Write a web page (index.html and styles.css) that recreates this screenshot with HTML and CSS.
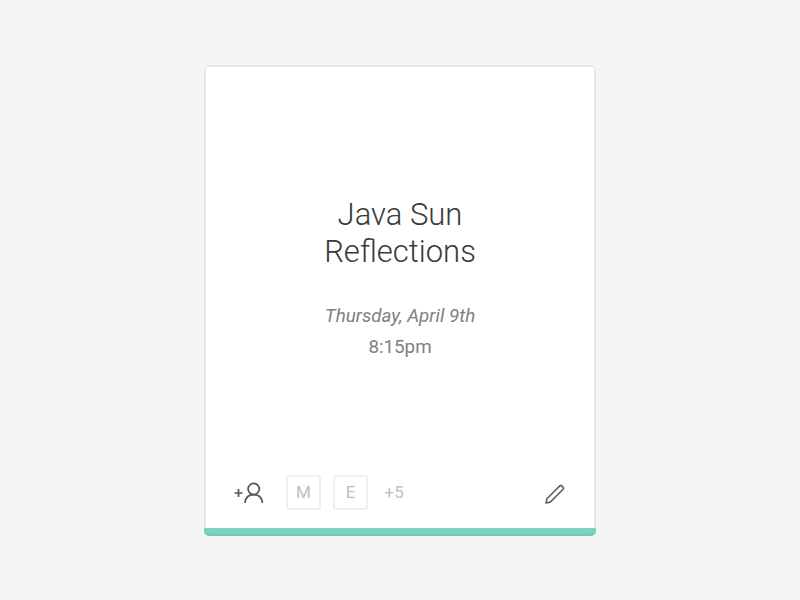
FILE: index.html
```html
<!DOCTYPE html>
<html lang="en">
<head>
<meta charset="utf-8">
<title>Java Sun Reflections</title>
<link rel="stylesheet" href="styles.css">
</head>
<body>
<article class="card">
  <div class="panel">
    <div class="details">
      <h1 class="title">Java Sun<br>Reflections</h1>
      <p class="date">Thursday, April 9th</p>
      <p class="time">8:15pm</p>
    </div>
    <footer class="actions">
      <svg class="add-person" width="30" height="22" viewBox="0 0 30 22" fill="none" stroke="#555" stroke-width="1.7">
        <path d="M0.5 11H8.5M4.5 7V15"/>
        <circle cx="19.7" cy="7" r="5.6"/>
        <path d="M10.9 21C11.4 15.8 14.8 12.6 19.7 12.6S28 15.8 28.5 21"/>
      </svg>
      <span class="guest">M</span>
      <span class="guest">E</span>
      <span class="more">+5</span>
      <svg class="edit" width="20" height="20" viewBox="0 0 20 20" fill="none" stroke="#606060" stroke-width="1.6" stroke-linejoin="round">
        <path d="M1 19L1.9 14.8L14.8 1.9Q15.8 1 16.7 1.9L18.1 3.3Q19 4.3 18.1 5.2L5.2 18.1Z"/>
      </svg>
    </footer>
  </div>
  <div class="accent"></div>
</article>
</body>
</html>
```

FILE: styles.css
```css
* { box-sizing: border-box; }
body {
  margin: 0;
  height: 600px;
  padding-top: 65px;
  background: #f5f5f5;
  font-family: Roboto, sans-serif;
}
.card {
  display: flex;
  flex-direction: column;
  width: 392px;
  height: 471px;
  margin: 0 auto;
}
.panel {
  display: flex;
  flex-direction: column;
  flex: 1;
  background: #fff;
  border: 2px solid #e8e8e8;
  border-bottom: 0;
  border-radius: 5px 5px 0 0;
}
.accent {
  height: 8px;
  background: #7ad5c0;
  border-bottom: 2px solid #70cbb6;
  border-radius: 0 0 5px 5px;
}
.details { flex: 1; padding-top: 129px; text-align: center; }
.title { margin: 0; font-size: 31px; line-height: 37px; font-weight: 300; color: #3a3a3a; }
.date, .time { margin: 0; font-size: 18.8px; line-height: 31px; color: #808080; }
.date { margin-top: 31px; font-style: italic; }
.actions { display: flex; align-items: center; height: 72px; padding: 0 29px 0 28px; }
.guest {
  width: 35px;
  height: 35px;
  border: 2px solid #f0f0f0;
  border-radius: 3px;
  text-align: center;
  font-size: 17px;
  line-height: 31px;
  color: #c0c0c0;
}
.add-person { margin: 2px 22px 0 0; }
.guest + .guest { margin-left: 12px; }
.more { margin-left: 16.5px; font-size: 17px; color: #c0c0c0; }
.edit { margin: 4px 0 0 auto; }
```
